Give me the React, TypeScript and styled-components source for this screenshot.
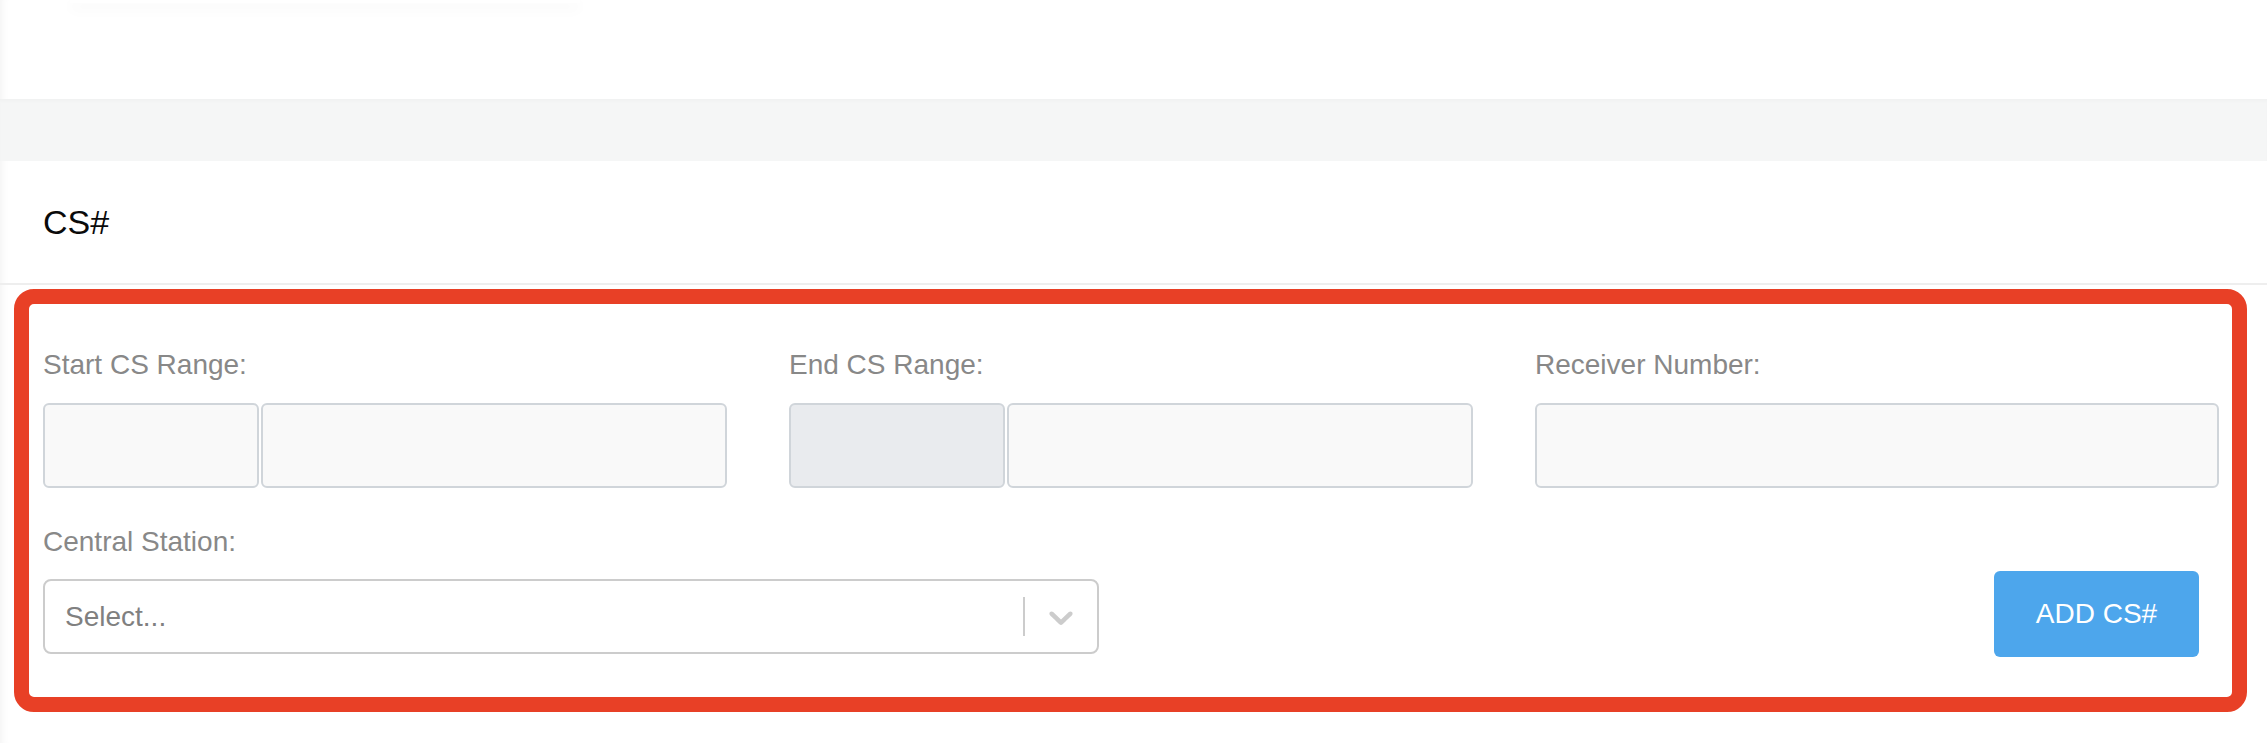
import React from 'react';
import styled, {createGlobalStyle} from 'styled-components';

const GlobalStyle = createGlobalStyle`
  html, body {
    margin: 0;
    padding: 0;
    background: #ffffff;
  }

  body {
    font-family: "Liberation Sans", Arial, Helvetica, sans-serif;
  }

  * {
    box-sizing: border-box;
  }
`;

const ChevronDown = () => (
  <svg width="40" height="40" viewBox="0 0 20 20" aria-hidden="true" focusable="false">
    <path
      fill="currentColor"
      d="M4.516 7.548c0.436-0.446 1.043-0.481 1.576 0l3.908 3.747 3.908-3.747c0.533-0.481 1.141-0.446 1.574 0 0.436 0.445 0.408 1.197 0 1.615-0.406 0.418-4.695 4.502-4.695 4.502-0.217 0.223-0.502 0.335-0.787 0.335s-0.57-0.112-0.789-0.335c0 0-4.287-4.084-4.695-4.502s-0.436-1.17 0-1.615z"
    />
  </svg>
);

type RangeFieldProps = {
  label: string;
  prefixDisabled?: boolean;
};

const RangeField = ({label, prefixDisabled}: RangeFieldProps) => (
  <Field>
    <Label>{label}</Label>
    <InputGroup>
      <Input type="text" disabled={prefixDisabled} $muted={prefixDisabled}/>
      <Input type="text"/>
    </InputGroup>
  </Field>
);

export default function App() {
  return (
    <>
      <GlobalStyle/>
      <Page>
        <TopArea>
          <MenuEdge/>
        </TopArea>
        <Band/>
        <Card>
          <CardHeader>
            <Title>CS#</Title>
          </CardHeader>
          <CardBody>
            <FieldsRow>
              <RangeField label="Start CS Range:"/>
              <RangeField label="End CS Range:" prefixDisabled/>
              <Field>
                <Label>Receiver Number:</Label>
                <Input type="text"/>
              </Field>
            </FieldsRow>
            <ActionRow>
              <Field>
                <Label>Central Station:</Label>
                <SelectBox>
                  <Placeholder>Select...</Placeholder>
                  <Separator/>
                  <Indicator>
                    <ChevronDown/>
                  </Indicator>
                </SelectBox>
              </Field>
              <AddButton type="button">ADD CS#</AddButton>
            </ActionRow>
          </CardBody>
        </Card>
        <Footer/>
      </Page>
    </>
  );
}

const Page = styled.div`
  width: 2267px;
  min-height: 743px;
  overflow: hidden;
  background: #ffffff;
  box-shadow: inset 10px 0 8px -8px rgba(0, 0, 0, 0.05);
`;

const TopArea = styled.div`
  height: 99px;
`;

const MenuEdge = styled.div`
  width: 510px;
  height: 3px;
  margin-left: 70px;
  background: #ffffff;
  box-shadow: 0 5px 14px rgba(0, 0, 0, 0.07);
`;

const Band = styled.div`
  height: 62px;
  background: #f5f6f6;
  box-shadow: inset 0 3px 4px -2px rgba(0, 0, 0, 0.03);
`;

const Card = styled.section`
  background: transparent;
`;

const CardHeader = styled.div`
  display: flex;
  align-items: center;
  height: 124px;
  padding-left: 43px;
  border-bottom: 2px solid #eeeeee;
`;

const Title = styled.h2`
  margin: 0;
  font-size: 34px;
  line-height: 40px;
  font-weight: 400;
  color: #0a0a0a;
`;

const CardBody = styled.div`
  margin: 4px 20px 0 14px;
  padding: 44px 13px 43px 14px;
  border: 15px solid #e84026;
  border-radius: 20px;
`;

const FieldsRow = styled.div`
  display: grid;
  grid-template-columns: repeat(3, 1fr);
  column-gap: 62px;
`;

const Field = styled.div`
  display: flex;
  flex-direction: column;
`;

const Label = styled.label`
  display: block;
  margin-bottom: 21px;
  font-size: 28px;
  line-height: 34px;
  color: #888888;
`;

const InputGroup = styled.div`
  display: grid;
  grid-template-columns: 216px 1fr;
  column-gap: 2px;
`;

const Input = styled.input<{$muted?: boolean}>`
  width: 100%;
  height: 85px;
  padding: 0 20px;
  font-family: inherit;
  font-size: 28px;
  background: ${p => p.$muted ? '#e9ebee' : '#f9f9f9'};
  border: 2px solid #d0d5da;
  border-radius: 6px;
  outline: none;
`;

const ActionRow = styled.div`
  display: flex;
  justify-content: space-between;
  align-items: flex-end;
  margin-top: 37px;

  ${Label} {
    margin-bottom: 20px;
  }
`;

const SelectBox = styled.div`
  display: flex;
  align-items: center;
  width: 1056px;
  height: 75px;
  background: #ffffff;
  border: 2px solid #cccccc;
  border-radius: 8px;
`;

const Placeholder = styled.span`
  flex: 1;
  padding-left: 20px;
  font-size: 28px;
  color: #808080;
`;

const Separator = styled.span`
  align-self: stretch;
  width: 2px;
  margin: 16px 0;
  background: #cccccc;
`;

const Indicator = styled.span`
  display: flex;
  padding: 16px;
  color: #cccccc;
`;

const AddButton = styled.button`
  width: 205px;
  height: 86px;
  margin: 0 20px -3px 0;
  font-family: inherit;
  font-size: 28px;
  color: #ffffff;
  background: #4da6ec;
  border: none;
  border-radius: 6px;
  cursor: pointer;
`;

const Footer = styled.div`
  height: 30px;
`;
